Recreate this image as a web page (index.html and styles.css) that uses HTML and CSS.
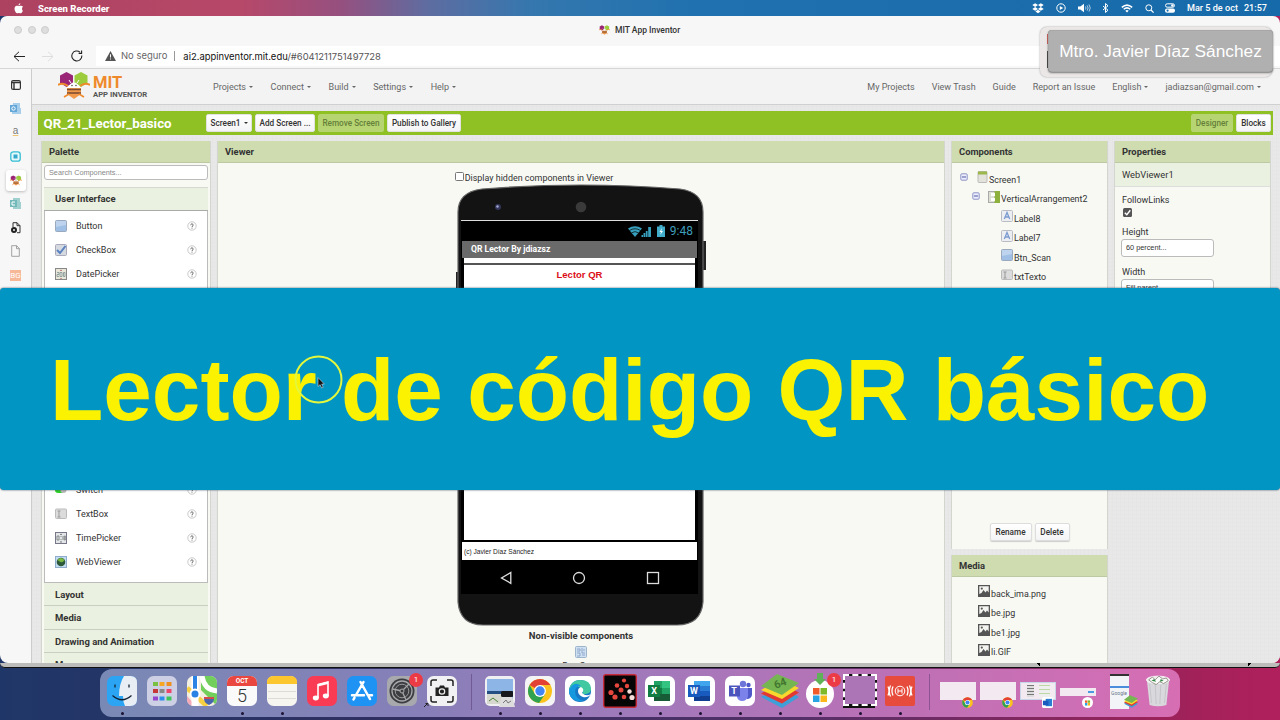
FILE: index.html
```html
<!DOCTYPE html>
<html lang="es">
<head>
    <meta charset="utf-8">
    <title>MIT App Inventor</title>
    <link rel="stylesheet" href="styles.css">
</head>
<body>
    <!-- shared icons -->
    <svg class="defs" width="0" height="0">
        <symbol id="help" viewBox="0 0 10 10"><circle cx="5" cy="5" r="4.200" fill="#fff" stroke="#bbb" stroke-width=".8"/><path d="M3.700 4.200c0-1.800 2.600-1.600 2.500-.1C6.200 5 5 4.900 5 6M5 6.700v.9" fill="none" stroke="#555" stroke-width=".9"/></symbol>
        <symbol id="button" viewBox="0 0 12 12"><rect x=".5" y=".5" width="11" height="11" rx="1" fill="#9fbfe4" stroke="#9aa9bd"/><path d="M1 1h10v4L1 7z" fill="#bdd3ee"/></symbol>
        <symbol id="textbox" viewBox="0 0 12 12"><rect x=".5" y="1" width="11" height="9.500" rx="1" fill="#dcdcdc" stroke="#bbb"/><path d="M2.500 3h3M4 3v6M2.500 9h3" stroke="#999" fill="none"/></symbol>
        <symbol id="label" viewBox="0 0 12 12"><rect x=".5" y=".5" width="11" height="11" rx="1" fill="#eceef2" stroke="#b9bcc4"/><path d="M3.300 9L6 2.500 8.700 9M4.300 7h3.400" fill="none" stroke="#7b9bd0" stroke-width="1.300"/></symbol>
        <symbol id="minus" viewBox="0 0 8 8"><rect x=".8" y=".8" width="6.400" height="6.400" rx="1" fill="#eef" stroke="#8c93c4"/><path d="M2 4h4" stroke="#4b559c"/></symbol>
        <symbol id="image" viewBox="0 0 12 12"><path d="M0 0h12v12H0z" fill="#555"/><path d="M1.300 1.300h9.400v6.200L9 5.500 7.500 7.500 5.500 5 3.500 8 1.300 9z" fill="#f3f3ef"/><circle cx="3.800" cy="3.600" r="1.100" fill="#555"/></symbol>
        <symbol id="bee" viewBox="0 0 32 27"><path d="M2 3.500L8.500 0 15 3.500V11l-6.500 4L2 11z" fill="#9a2577"/><path d="M16.500 3.500L23 0l6.500 3.500V11L23 15l-6.500-4z" fill="#9ccb3c"/><path d="M0 13q5-3 10 1M32 13q-5-3-10 1" stroke="#ef8a2c" stroke-width="2" fill="none"/><path d="M9 16q7-11 14 0z" fill="#fff"/><path d="M13 11l-2-3M19 11l2-3" stroke="#fff"/><circle cx="14" cy="13.500" r=".8" fill="#555"/><circle cx="18" cy="13.500" r=".8" fill="#555"/><path d="M9 16h14v6l-7 5-7-5z" fill="#f29a4b"/><path d="M9 17.500h14M9 21h14" stroke="#7a4a30" stroke-width="1.700"/><path d="M6 25l5-3M26 25l-5-3" stroke="#ef8a2c" stroke-width="1.500"/></symbol>
        <symbol id="chrome" viewBox="0 0 26 26"><circle cx="13" cy="13" r="12.500" fill="#fbc31c"/><path d="M13 13L2.200 6.700A12.500 12.500 0 0 1 23.800 6.800H13z" fill="#e24134"/><path d="M2.200 6.700A12.500 12.500 0 0 0 12 25.500L18.400 16 13 13 7.600 16z" fill="#31a350"/><circle cx="13" cy="13" r="6.200" fill="#fff"/><circle cx="13" cy="13" r="4.900" fill="#4285f4"/></symbol>
        <symbol id="ms" viewBox="0 0 14 14"><path d="M0 0h6.500v6.500H0z" fill="#ef5b2b"/><path d="M7.500 0H14v6.500H7.500z" fill="#7db928"/><path d="M0 7.500h6.500V14H0z" fill="#28a3e4"/><path d="M7.500 7.500H14V14H7.500z" fill="#fbb81b"/></symbol>
        <symbol id="stack" viewBox="0 0 38 34"><path d="M0 23l19-11 19 11-17 11z" fill="#3f9fd8"/><path d="M0 19.500l19-11 19 10-17 11z" fill="#e23a33"/><path d="M0 16L19 5l19 9-17 11z" fill="#f9d82e"/><path d="M0 12L16 0l22 9-17 12z" fill="#76b652"/></symbol>
    </svg>

    <div class="menubar">
        <svg class="apple" viewBox="0 0 10 12"><path d="M7 .3C5.700.5 5 1.500 5.100 2.600 6.300 2.500 7 1.500 7 .3zM8.900 6.200c0-1 .4-1.700 1.100-2.100C9 2.700 7.200 2.700 6.500 3c-.8.400-1.500.3-2.200 0C1.900 2.300.3 4.200.6 6.800c.3 2.300 1.700 4.500 3 4.500.8 0 1.100-.4 2-.4s1.200.5 2 .4c1-.1 1.900-1.700 2.200-2.800-.6-.4-.9-1.200-.9-2.300z" fill="#fff"/></svg>
        <b>Screen Recorder</b>
        <div class="status">
            <svg width="12" height="11" viewBox="0 0 12 11"><path d="M3.200.3L6 2.100 3.200 4 .3 2.100zM8.800.3l2.900 1.800L8.800 4 6 2.100zM3.200 4L6 5.900 3.200 7.700.3 5.900zM8.800 4l2.900 1.900-2.900 1.800L6 5.900zM6 6.800l2.600 1.700L6 10.300 3.400 8.500z" fill="#fff"/></svg>
            <svg width="10" height="10" viewBox="0 0 10 10"><circle cx="5" cy="5" r="4.200" fill="none" stroke="#fff"/><path d="M3.800 2.900v4.200L7.200 5z" fill="#fff"/></svg>
            <svg width="13" height="10" viewBox="0 0 13 10"><path d="M0 3.500h2.300L6 .8v8.400L2.300 6.500H0z" fill="#fff"/><path d="M7.500 3.500q1 1.500 0 3M9.200 2.400q1.800 2.600 0 5.200M11 1.500q2.500 3.500 0 7" stroke="#cfe2f3" fill="none" stroke-width=".8"/></svg>
            <svg width="7" height="10" viewBox="0 0 7 10"><path d="M1 3l5 4.200L3.500 9.500v-9L6 2.800 1 7" fill="none" stroke="#fff"/></svg>
            <svg width="12" height="9" viewBox="0 0 12 9"><path d="M.8 3.400q5.200-4.600 10.400 0M2.700 5.300q3.300-2.800 6.600 0" fill="none" stroke="#fff" stroke-width="1.500"/><path d="M4.300 6.700q1.700-1.200 3.400 0L6 8.600z" fill="#fff"/></svg>
            <svg width="9" height="9" viewBox="0 0 9 9"><circle cx="3.800" cy="3.800" r="3" fill="none" stroke="#fff"/><path d="M6 6l2.600 2.600" stroke="#fff" stroke-width="1.200"/></svg>
            <svg width="10" height="10" viewBox="0 0 10 10"><rect x=".5" y=".8" width="9" height="3.400" rx="1.700" fill="none" stroke="#fff"/><rect x="0" y="5.500" width="10" height="4.300" rx="2" fill="#fff"/><circle cx="7.400" cy="2.500" r="1.300" fill="#fff"/><circle cx="2.600" cy="7.600" r="1.100" fill="#1b6dab"/></svg>
            <span class="clock"><span>Mar 5 de oct</span><span>21:57</span></span>
        </div>
    </div>

    <div class="window">
        <div class="titlebar">
            <div class="lights"><i></i><i></i><i></i></div>
            <div class="tab-title"><svg width="11" height="10"><use href="#bee"/></svg>MIT App Inventor</div>
        </div>
        <div class="toolbar">
            <svg width="12" height="11" viewBox="0 0 12 11"><path d="M6 .8L1 5.500l5 4.700M1 5.500h11" fill="none" stroke="#222"/></svg>
            <svg width="12" height="11" viewBox="0 0 12 11"><path d="M6 .8l5 4.700-5 4.700M11 5.500H0" fill="none" stroke="#ddd"/></svg>
            <svg width="12" height="12" viewBox="0 0 12 12"><path d="M10.800 5.500A5 5 0 1 1 9 2.100M10.600.4v3h-3" fill="none" stroke="#222" stroke-width="1.100"/></svg>
            <div class="address">
                <svg width="11" height="10" viewBox="0 0 11 10"><path d="M5.500 0L11 10H0z" fill="#555"/><path d="M5.500 3.300v3.200M5.500 7.500v1" stroke="#fff"/></svg>
                <span class="insecure">No seguro</span>
                <span class="url">ai2.appinventor.mit.edu<em>/#6041211751497728</em></span>
            </div>
        </div>

        <div class="content">
            <div class="tabs">
                <div class="tab"><svg width="10" height="10" viewBox="0 0 10 10"><rect x=".6" y=".6" width="8.800" height="8.800" rx="1.500" fill="none" stroke="#333" stroke-width="1.200"/><path d="M1 2.500h8M3 2v7" stroke="#333" stroke-width="1.400"/></svg></div>
                <div class="tab"><svg width="11" height="11" viewBox="0 0 11 11"><path d="M3 0h7v5h1v6H2V8z" fill="#a6cdea"/><rect y="2" width="7" height="7" fill="#62a7d8"/><circle cx="3.500" cy="5.500" r="1.700" fill="none" stroke="#fff"/></svg></div>
                <div class="tab amazon">a</div>
                <div class="tab"><svg width="11" height="11" viewBox="0 0 11 11"><rect x=".8" y=".8" width="9.400" height="9.400" rx="2.500" fill="#e5f8fb" stroke="#35bdd2" stroke-width="1.300"/><rect x="3.500" y="3.500" width="4" height="4" fill="#35a9cc"/></svg></div>
                <div class="tab"><span class="active-tab"><svg width="12" height="11"><use href="#bee"/></svg></span></div>
                <div class="tab"><svg width="11" height="11" viewBox="0 0 11 11"><path d="M3 0h7v4h1v7H3V9z" fill="#9fd0cf"/><rect y="2" width="7" height="7" fill="#73b9b9"/><path d="M5 4H2v3h3" fill="none" stroke="#fff"/></svg></div>
                <div class="tab"><svg width="10" height="12" viewBox="0 0 10 12"><path d="M2 5V.7h4l3 3v7H6M6 .7v3h3" fill="none" stroke="#333"/><circle cx="3" cy="8" r="3" fill="#222"/><path d="M2 7l2 2M4 7L2 9" stroke="#fff" stroke-width=".7"/></svg></div>
                <div class="tab"><svg width="9" height="12" viewBox="0 0 9 12"><path d="M.7.7h5L8.300 3.500v7.800H.7zM5.500.7v3h3" fill="none" stroke="#999" stroke-width=".9"/></svg></div>
                <div class="tab"><span class="bg-icon">BG</span></div>
            </div>

            <div class="page">
                <div class="nav">
                    <div class="brand">
                        <svg width="32" height="27"><use href="#bee"/></svg>
                        <div><strong>MIT</strong><span>APP INVENTOR</span></div>
                    </div>
                    <div class="menu">
                        <span class="drop">Projects</span><span class="drop">Connect</span><span class="drop">Build</span><span class="drop">Settings</span><span class="drop">Help</span>
                    </div>
                    <div class="menu menu-right">
                        <span>My Projects</span><span>View Trash</span><span>Guide</span><span>Report an Issue</span><span class="drop">English</span><span class="drop">jadiazsan@gmail.com</span>
                    </div>
                </div>

                <div class="project-bar">
                    <h1>QR_21_Lector_basico</h1>
                    <button class="btn w46 drop">Screen1</button>
                    <button class="btn w60">Add Screen ...</button>
                    <button class="btn w66 off">Remove Screen</button>
                    <button class="btn w74">Publish to Gallery</button>
                    <span class="grow"></span>
                    <button class="btn w42 off">Designer</button>
                    <button class="btn w35">Blocks</button>
                </div>

                <div class="workspace">
                    <div class="panel palette">
                        <h2>Palette</h2>
                        <div class="search">Search Components...</div>
                        <div class="category open">User Interface</div>
                        <ul class="items">
                            <li><svg><use href="#button"/></svg>Button<svg class="help"><use href="#help"/></svg></li>
                            <li><svg viewBox="0 0 12 12"><rect x=".5" y=".5" width="11" height="11" rx="1" fill="#d5dae1" stroke="#aab"/><path d="M2 6l3 3 5.500-7" fill="none" stroke="#5b82c0" stroke-width="2"/></svg>CheckBox<svg class="help"><use href="#help"/></svg></li>
                            <li><svg viewBox="0 0 12 12"><rect x=".5" y=".5" width="11" height="11" fill="#e9e6da" stroke="#888"/><path d="M2 4.500h2v2H2v2h2M5 4.500h2v4H5zM8.500 4.500v4h1.500v-4z" fill="none" stroke="#7f9494" stroke-width=".8"/><path d="M5 3l1-1.500L7 3zM5 10l1 1 1-1z" fill="#a55"/></svg>DatePicker<svg class="help"><use href="#help"/></svg></li>
                            <li class="after-gap"><svg viewBox="0 0 12 12"><rect y="3" width="9" height="6" rx="3" fill="#2bd02b"/><circle cx="8.500" cy="6" r="3" fill="#bbb"/></svg>Switch<svg class="help"><use href="#help"/></svg></li>
                            <li><svg><use href="#textbox"/></svg>TextBox<svg class="help"><use href="#help"/></svg></li>
                            <li><svg viewBox="0 0 12 12"><rect x=".5" y=".5" width="11" height="11" fill="#e2e6e8" stroke="#778"/><path d="M2 4h2v4H2zM6 4v1M6 7v1M8 4v4M9.300 4h1v4h-1z" fill="none" stroke="#777" stroke-width=".8"/><path d="M5 3l1-1.500L7 3zM5 9.500l1 1.500 1-1.500z" fill="#555"/></svg>TimePicker<svg class="help"><use href="#help"/></svg></li>
                            <li><svg viewBox="0 0 12 12"><rect x=".5" y=".5" width="11" height="11" fill="#c4dcf2" stroke="#8eaccb"/><circle cx="6" cy="6" r="4.300" fill="#2c5a3a"/><path d="M2.500 4q3-4 7 0-2 3-4 2t-3-2z" fill="#79b843"/></svg>WebViewer<svg class="help"><use href="#help"/></svg></li>
                        </ul>
                        <div class="category">Layout</div>
                        <div class="category">Media</div>
                        <div class="category">Drawing and Animation</div>
                        <div class="category">Maps</div>
                    </div>

                    <div class="panel viewer">
                        <h2>Viewer</h2>
                        <div class="hidden-toggle"><i></i>Display hidden components in Viewer</div>
                        <div class="phone">
                            <svg viewBox="0 0 252 442" width="252" height="442">
                                <path d="M1 88h4v60H1zM247 57h4v29h-4z" fill="#222"/>
                                <path d="M3 28Q3 8 27 5Q126-3 225 5Q248 8 248 28V418Q246 441 222 441H28Q5 441 3 418z" fill="#131313" stroke="#666" stroke-width="1.200"/>
                                <circle cx="43" cy="23" r="3" fill="#33365a"/><circle cx="42.500" cy="22.500" r="1.200" fill="#a5a8d0"/>
                                <circle cx="126" cy="23" r="5.300" fill="#3a3a3a"/>
                            </svg>
                            <div class="screen">
                                <div class="android-status">
                                    <svg width="24" height="11" viewBox="0 0 24 11"><path d="M0 2.500q7-4.500 14 0L7 11z" fill="#38a0bd"/><path d="M1.500 4.500q5.500-3.500 11 0M3.500 6.800q3.500-2.300 7 0" fill="none" stroke="#000" stroke-width=".7"/><path d="M13.500 11v-2h1.500v2zM15.500 11V7h1.800v4zM17.800 11V5h1.800v6zM20.200 11V1h2.800v10z" fill="#38a0bd"/></svg>
                                    <svg width="8" height="12" viewBox="0 0 8 12"><path d="M2.500 0h3v1.500H8V12H0V1.500h2.500z" fill="#43aecb"/><path d="M5 3L2.500 7H4l-.8 3L6 6H4.300z" fill="#fff"/></svg>
                                    9:48
                                </div>
                                <div class="app-title">QR Lector By jdiazsz</div>
                                <div class="app-body">Lector QR</div>
                                <div class="app-foot">(c) Javier Díaz Sánchez</div>
                                <div class="android-nav">
                                    <svg width="12" height="14" viewBox="0 0 12 14"><path d="M10.800 1.500v10.800L1.500 7z" fill="none" stroke="#ddd" stroke-width="1.300"/></svg>
                                    <svg width="14" height="14" viewBox="0 0 14 14"><circle cx="7" cy="7" r="5.500" fill="none" stroke="#ddd" stroke-width="1.300"/></svg>
                                    <svg width="14" height="14" viewBox="0 0 14 14"><rect x="1.500" y="1.500" width="11" height="11" fill="none" stroke="#ddd" stroke-width="1.300"/></svg>
                                </div>
                            </div>
                        </div>
                        <div class="nonvisible">
                            <b>Non-visible components</b>
                            <svg width="12" height="12" viewBox="0 0 12 12"><rect x=".5" y=".5" width="11" height="11" rx="1" fill="#cfe0f0" stroke="#9db4cc"/><path d="M2 3h3v2H2M7 2v5h3M2 7h3v3H2M7 9h3M9 3v2" fill="none" stroke="#7d9dc4" stroke-width=".8"/></svg>
                            <span>Bar_Scan</span>
                        </div>
                    </div>

                    <div class="column">
                        <div class="panel components">
                            <h2>Components</h2>
                            <div class="tree">
                                <div class="node"><svg class="minus"><use href="#minus"/></svg><svg viewBox="0 0 12 12"><rect x="2" y=".5" width="9" height="11" rx="1" fill="#e3e3dc" stroke="#bbb"/><path d="M2 .5h9v3H2z" fill="#9cb84a"/></svg>Screen1</div>
                                <div class="node n2"><svg class="minus"><use href="#minus"/></svg><svg viewBox="0 0 12 12"><rect x=".5" y=".5" width="11" height="11" fill="#dde1d3" stroke="#aaa"/><path d="M6.500 0H12v12H6.500z" fill="#8db13c"/><path d="M3 2h4v3H3zM3 7h4v3H3z" fill="#fff"/></svg>VerticalArrangement2</div>
                                <div class="node n3"><svg><use href="#label"/></svg>Label8</div>
                                <div class="node n3"><svg><use href="#label"/></svg>Label7</div>
                                <div class="node n3"><svg><use href="#button"/></svg>Btn_Scan</div>
                                <div class="node n3"><svg><use href="#textbox"/></svg>txtTexto</div>
                            </div>
                            <div class="actions"><button class="btn w42">Rename</button><button class="btn w35">Delete</button></div>
                        </div>
                        <div class="panel media">
                            <h2>Media</h2>
                            <div class="files">
                                <div class="node"><svg><use href="#image"/></svg>back_ima.png</div>
                                <div class="node"><svg><use href="#image"/></svg>be.jpg</div>
                                <div class="node"><svg><use href="#image"/></svg>be1.jpg</div>
                                <div class="node"><svg><use href="#image"/></svg>li.GIF</div>
                            </div>
                        </div>
                    </div>

                    <div class="panel properties">
                        <h2>Properties</h2>
                        <div class="selected">WebViewer1</div>
                        <label>FollowLinks</label>
                        <svg class="check" viewBox="0 0 9 9"><rect width="9" height="9" rx="1.500" fill="#555"/><path d="M1.800 4.700l2 2 3.500-4.500" fill="none" stroke="#fff" stroke-width="1.400"/></svg>
                        <label>Height</label>
                        <div class="field">60 percent...</div>
                        <label>Width</label>
                        <div class="field">Fill parent...</div>
                    </div>
                </div>
            </div>
        </div>
    </div>
    <div class="back-window"><i></i><i></i></div>

    <div class="dock">
        <div class="app run"><svg viewBox="0 0 30 30"><rect width="30" height="30" rx="6.500" fill="#2ba4f4"/><path d="M17 0h6.500Q30 0 30 6.500v17Q30 30 23.500 30H18q-2-4-2-10h-4Q12 8 17 0z" fill="#e9eef5"/><path d="M8 8.500v3M22 8.500v3" stroke="#123" stroke-width="1.300"/><path d="M5.500 19.500q9.500 8.500 19 0" fill="none" stroke="#123" stroke-width="1.200"/></svg></div>
        <div class="app"><svg viewBox="0 0 30 30"><rect width="30" height="30" rx="6.500" fill="#cdd0e4"/><path d="M6 6h5v4H6z" fill="#7ac143"/><path d="M12.500 6h5v4h-5z" fill="#f7a623"/><path d="M19.500 6h5v4h-5z" fill="#ef8f20"/><path d="M6 13h5v4H6z" fill="#c63838"/><path d="M12.500 13h5v4h-5z" fill="#888"/><path d="M19.500 13h5v4h-5z" fill="#ef4469"/><path d="M6 20.500h5v4H6z" fill="#9446cf"/><path d="M12.500 20.500h5v4h-5z" fill="#2d8fec"/><path d="M19.500 20.500h5v4h-5z" fill="#3fc45a"/></svg></div>
        <div class="app"><svg viewBox="0 0 30 30"><clipPath id="r"><rect width="30" height="30" rx="6.500"/></clipPath><g clip-path="url(#r)"><path d="M0 0h30v30H0z" fill="#f2efe2"/><path d="M14 0h16v30L14 14z" fill="#72cf5c"/><path d="M15 0q2 14 15 15" stroke="#fff" stroke-width="5" fill="none"/><path d="M0 12l20 18" stroke="#f7cf43" stroke-width="5"/><path d="M0 20v10h9z" fill="#f3a9b8"/><path d="M8 0v30" stroke="#fff" stroke-width="7"/><path d="M8 0v16" stroke="#2a82e4" stroke-width="4"/><circle cx="8" cy="18" r="4.500" fill="#2a82e4" stroke="#fff" stroke-width="2"/><path d="M17 21h10q1 5-5 8-6-3-5-8z" fill="#4865ae"/><path d="M17 21h10v2H17z" fill="#d34b4b"/></g></svg></div>
        <div class="app run"><div class="calendar"><b>OCT</b><span>5</span></div></div>
        <div class="app run"><svg viewBox="0 0 30 30"><rect width="30" height="30" rx="6.500" fill="#f6f5f0"/><path d="M0 8V6.500Q0 0 6.500 0h17Q30 0 30 6.500V8z" fill="#fcc62f"/><path d="M1 15.500h28M1 22.500h28" stroke="#d2d0ca" stroke-width=".7"/></svg></div>
        <div class="app"><svg viewBox="0 0 30 30"><rect width="30" height="30" rx="6.500" fill="#f93b54"/><path d="M11 22V8.500L21 6v14" fill="none" stroke="#fff" stroke-width="1.600"/><path d="M11 10.500L21 8V5.500L11 8z" fill="#fff"/><ellipse cx="8.800" cy="22" rx="3" ry="2.400" fill="#fff"/><ellipse cx="18.800" cy="20" rx="3" ry="2.400" fill="#fff"/></svg></div>
        <div class="app"><svg viewBox="0 0 30 30"><rect width="30" height="30" rx="6.500" fill="#1e93f3"/><path d="M16.500 6L9 19M6.500 23.500l1-1.800M13.500 6l9.500 17M5 19.300h12M21 19.300h4" fill="none" stroke="#fff" stroke-width="2.500" stroke-linecap="round"/></svg></div>
        <div class="app"><svg viewBox="0 0 30 30"><rect width="30" height="30" rx="6.500" fill="#a8a9ad"/><circle cx="15" cy="15" r="12.500" fill="#3b3d40"/><circle cx="15" cy="15" r="10" fill="none" stroke="#a7a8aa" stroke-width="1.300"/><circle cx="15" cy="15" r="6.800" fill="none" stroke="#98999b"/><path d="M15 15L5.500 13M15 15l7-7M15 15l4 9" stroke="#a7a8aa" stroke-width="1.300"/><circle cx="15" cy="15" r="2" fill="#3b3d40" stroke="#aaa"/></svg><span class="badge">1</span></div>
        <div class="app"><svg viewBox="0 0 30 30"><rect width="30" height="30" rx="6.500" fill="#f1f0f3"/><path d="M4 10V6q0-2 2-2h4M20 4h4q2 0 2 2v4M26 20v4q0 2-2 2h-4M10 26H6q-2 0-2-2v-4" fill="none" stroke="#222" stroke-width="1.500"/><path d="M8.500 11.500H12l1-2h4l1 2h3.500v8.500h-13z" fill="#222"/><circle cx="15" cy="15.500" r="2.700" fill="none" stroke="#eee" stroke-width="1.200"/><path d="M-3 31l3-3M-1.500 27.500H1V30" fill="none" stroke="#222"/></svg></div>
        <hr>
        <div class="app run"><svg viewBox="0 0 30 30"><rect width="30" height="30" rx="5" fill="#f0f0f2"/><path d="M2 3h26v24H2z" fill="#8db6e6"/><path d="M2 15h26v6H2z" fill="#254f83"/><path d="M2 18h15v10H2z" fill="#d6d7cf"/><path d="M4 25l4-3 5 4" stroke="#4d843a" fill="none"/><path d="M17 20h10l3 11H14z" fill="#ddd"/><path d="M18 27l3-3 2 3 3-2" fill="none" stroke="#777"/><rect x="16" y="15" width="12" height="6" rx="1.500" fill="#17191c"/></svg></div>
        <div class="app run"><svg viewBox="0 0 30 30"><rect width="30" height="30" rx="6.500" fill="#f4f4f4"/><use href="#chrome" x="2.500" y="2.500" width="25" height="25"/></svg></div>
        <div class="app run"><svg viewBox="0 0 30 30"><rect width="30" height="30" rx="6.500" fill="#fff"/><circle cx="15" cy="15" r="11" fill="#1878c5"/><path d="M4 14Q6 4 15 4q11 0 11 9 0 6-9 5 2-2 0-5Q12 8 4 14z" fill="#42c9a1"/><path d="M4 14Q9 4 16 10q-5 0-6 5 0 8 9 10-12 2-15-8z" fill="#1598de"/><path d="M13 15q0-3 3-4 4 2 1 6 4 4 9 1-3 4-8 3-5-2-5-6z" fill="#fff"/></svg></div>
        <div class="app run"><svg class="wide" viewBox="0 0 34 34"><rect x=".7" y=".7" width="32.600" height="32.600" rx="2" fill="#050505" stroke="#c62c3a" stroke-width="1.400"/><g fill="#e5473f"><circle cx="21" cy="6.500" r="2.100"/><circle cx="14" cy="11.500" r="2.300"/><circle cx="24" cy="12" r="2.200"/><circle cx="8" cy="18.500" r="2.600"/><circle cx="18" cy="16" r="2.500"/><circle cx="12" cy="23" r="2.600"/><circle cx="21" cy="23" r="2.300"/></g><g fill="#f5dcd9"><circle cx="26.500" cy="17.500" r="2.200"/><circle cx="29" cy="23.500" r="2.600"/></g></svg></div>
        <div class="app run"><svg viewBox="0 0 30 30"><rect width="30" height="30" rx="6.500" fill="#fff"/><path d="M9 5h16v20H9z" fill="#21a366"/><path d="M17 5h8v7h-8z" fill="#33c481"/><path d="M9 12h8v7H9z" fill="#107c41"/><path d="M9 18h16v7H9z" fill="#185c37"/><path d="M3 9h12v12H3z" fill="#107c41"/></svg><b class="letter">X</b></div>
        <div class="app run"><svg viewBox="0 0 30 30"><rect width="30" height="30" rx="6.500" fill="#fff"/><path d="M9 5h16v20H9z" fill="#2b7cd3"/><path d="M9 5h16v5H9z" fill="#41a5ee"/><path d="M9 15h16v5H9z" fill="#185abd"/><path d="M9 20h16v5H9z" fill="#103f91"/><path d="M3 9h12v12H3z" fill="#185abd"/></svg><b class="letter">W</b></div>
        <div class="app run"><svg viewBox="0 0 30 30"><rect width="30" height="30" rx="6.500" fill="#fff"/><circle cx="18" cy="8" r="3.200" fill="#6d76d8"/><circle cx="23.500" cy="9" r="2.200" fill="#5059c9"/><path d="M18 12h9v7q-1 4-5 4z" fill="#5059c9"/><path d="M12 12h11v8q-1 5-6 5-4 0-5-4z" fill="#7b83eb"/><path d="M4 9.500h11v11H4z" fill="#4b53bc"/></svg><b class="letter">T</b></div>
        <div class="app run"><svg class="stack"><use href="#stack"/></svg><span class="n64">64</span></div>
        <div class="app run"><svg viewBox="0 0 30 30"><circle cx="15" cy="18" r="14" fill="#fff"/><use href="#ms" x="8" y="12" width="14" height="14"/><path d="M12-3h6v6h3l-6 6-6-6h3z" fill="#5fb257"/></svg><span class="badge">1</span></div>
        <div class="app run"><div class="marquee"></div></div>
        <div class="app run"><svg viewBox="0 0 30 30"><rect width="30" height="30" rx="2" fill="#e64b3c"/><circle cx="15" cy="15" r="4.800" fill="none" stroke="#fff"/><path d="M13 12.500v5M17 12.500v5M13 15h4" stroke="#fff"/><path d="M8 10.500q-2 4.500 0 9M5.500 9.500q-2.500 5.500 0 11M3 10.500q2 4.500 0 9M22 10.500q2 4.500 0 9M24.500 9.500q2.500 5.500 0 11M27 10.500q-2 4.500 0 9" stroke="#fff" stroke-width="1.300" fill="none"/></svg></div>
        <hr>
        <div class="app mini"><div class="thumb"></div><svg><use href="#chrome"/></svg></div>
        <div class="app mini"><div class="thumb"></div><svg><use href="#chrome"/></svg></div>
        <div class="app mini"><div class="thumb doc"><i></i><i></i></div><svg viewBox="0 0 12 12"><rect width="12" height="12" rx="2" fill="#fff"/><path d="M4 2h7v8H4z" fill="#2b7cd3"/><path d="M1 4h6v5H1z" fill="#185abd"/></svg></div>
        <div class="app mini"><div class="thumb flat"><i></i></div><svg viewBox="0 0 14 14"><circle cx="7" cy="7" r="7" fill="#fff"/><use href="#ms" x="3.500" y="4" width="7" height="7"/></svg></div>
        <div class="app mini tall"><div class="shot"><span>Google</span></div><svg><use href="#stack"/></svg></div>
        <div class="app"><svg class="trash" viewBox="0 0 28 34"><path d="M2 5h24l-3 27q-9 3-18 0z" fill="#d9d9dd"/><path d="M5 9l2 21M11 10l1 21M17 10l-1 21M23 9l-2 21" stroke="#c2c2c8" fill="none"/><ellipse cx="14" cy="5" rx="12.500" ry="4" fill="#eee" stroke="#f7f7f7"/><path d="M4 5l4-3 3 3 4-4 4 3 4-1 2 3-5 3-4-2-4 3-4-2z" fill="#fafafa" stroke="#665" stroke-width=".7"/><path d="M7 6l3-2 2 3zM17 4l3 2-4 1z" fill="#384"/></svg></div>
    </div>

    <div class="notification"><i></i></div>
    <div class="author">Mtro. Javier Díaz Sánchez</div>
    <div class="banner"><span>Lector de código QR básico</span></div>
    <svg class="pointer" width="50" height="50" viewBox="0 0 50 50"><circle cx="25.500" cy="25.500" r="23" fill="none" stroke="#e4f73c" stroke-width="2"/><path d="M25 23.500v9l2.100-1.800 1.500 3.300 1.600-.7-1.500-3.200h2.700z" fill="#111" stroke="#cde" stroke-width=".6"/></svg>
</body>
</html>
```
FILE: styles.css
```css
* {
    box-sizing: border-box;
}
body {
    margin: 0;
    width: 1280px;
    height: 720px;
    overflow: hidden;
    position: relative;
    font-family: Roboto, sans-serif;
    font-size: 9px;
    color: #333;
    background: linear-gradient(90deg, #1f3768 0, #302f60 400px, #553068 800px, #a32159 1200px, #b0205c 1280px);
}
svg {
    display: block;
    flex: none;
}
.defs {
    position: absolute;
}

/* system menu bar */
.menubar {
    height: 16px;
    display: flex;
    align-items: center;
    padding: 0 13px 0 14px;
    color: #fff;
    font-size: 9.5px;
    background: linear-gradient(90deg, #ad4260 0, #b74869 240px, #96507f 340px, #5d6da1 430px, #3577ae 530px, #1f71af 700px, #176aa9 100%);
}
.apple {
    width: 9px;
    height: 11px;
    margin-right: 15px;
}
.menubar b {
    font-weight: 800;
}
.status {
    margin-left: auto;
    display: flex;
    align-items: center;
    gap: 11.7px;
}
.clock {
    display: flex;
    gap: 6px;
    font-weight: 500;
    font-size: 9.1px;
}

/* browser */
.window {
    height: 647px;
    display: flex;
    flex-direction: column;
    background: #f7f7f7;
    border-radius: 7px 7px 8px 8px;
    overflow: hidden;
}
.titlebar {
    height: 28px;
    flex: none;
    display: flex;
    align-items: center;
}
.lights {
    display: flex;
    gap: 5.500px;
    padding-left: 14px;
}
.lights i {
    width: 8px;
    height: 8px;
    border-radius: 50%;
    background: #dedede;
    border: 1px solid #ccc;
}
.tab-title {
    display: flex;
    gap: 5px;
    align-items: center;
    margin-left: 550px;
    font-weight: 500;
    font-size: 8.5px;
}
.toolbar {
    height: 24px;
    flex: none;
    display: flex;
    align-items: center;
    padding-left: 13px;
    gap: 17px;
}
.address {
    flex: 1;
    height: 20px;
    margin-left: -4px;
    padding-left: 9px;
    background: #fff;
    display: flex;
    align-items: center;
    gap: 5px;
    font-family: Inter, sans-serif;
    font-size: 9.45px;
}
.insecure {
    color: #666;
    padding-right: 7px;
    border-right: 1px solid #999;
    line-height: 10px;
}
.url {
    margin-left: 3px;
    color: #111;
}
.url em {
    font-style: normal;
    color: #555;
}
.content {
    flex: 1;
    display: flex;
    min-height: 0;
    border-top: 1px solid #d5d5d5;
}
.tabs {
    width: 32px;
    flex: none;
    padding-top: 4px;
    border-right: 1px solid #ccc;
}
.tab {
    height: 23.8px;
    display: flex;
    align-items: center;
    justify-content: center;
}
.amazon {
    padding-bottom: 4px;
    font-family: "Liberation Sans", sans-serif;
    font-size: 10px;
    color: #777;
    text-decoration: underline #efc470;
}
.active-tab {
    padding: 5px 4px;
    background: #fff;
    border-radius: 3px;
    box-shadow: 0 1px 3px #bbb;
}
.bg-icon {
    background: #f7b898;
    color: #fff;
    font-size: 8px;
    line-height: 11px;
}

/* App Inventor */
.page {
    flex: 1;
    display: flex;
    flex-direction: column;
    min-width: 0;
    background: repeating-linear-gradient(0deg, rgba(0,0,0,.008) 0 1px, transparent 1px 4px), repeating-linear-gradient(90deg, rgba(0,0,0,.008) 0 1px, transparent 1px 4px), #e8e8e8;
}
.nav {
    height: 36px;
    flex: none;
    display: flex;
    align-items: center;
    padding: 0 19px 0 26px;
    background: #f3f3f3;
    border-bottom: 1px solid #d0d0d0;
    color: #666;
}
.brand {
    display: flex;
    gap: 3px;
    width: 155px;
    margin-top: -3px;
}
.brand strong, .brand span {
    display: block;
    white-space: nowrap;
}
.brand strong {
    margin-top: 3px;
    font-size: 16.500px;
    line-height: 15px;
    color: #ef8a2c;
}
.brand span {
    font-size: 7.700px;
    line-height: 9px;
    font-weight: 700;
    color: #555;
}
.menu {
    display: flex;
    gap: 17.6px;
}
.menu-right {
    margin-left: auto;
    gap: 17px;
}
.drop::after {
    content: "";
    display: inline-block;
    margin-left: 3px;
    vertical-align: 2px;
    border: 2.800px solid transparent;
    border-top-color: currentColor;
    border-bottom: 0;
}
.project-bar {
    height: 24px;
    flex: none;
    margin: 6px 7px 6px 6px;
    padding: 0 2px 0 5.500px;
    background: #8fc024;
    display: flex;
    align-items: center;
    gap: 3px;
}
.project-bar h1 {
    margin: 2px 0 0;
    width: 159.500px;
    font-size: 13.300px;
    line-height: 20px;
    color: #fff;
}
.btn {
    flex: none;
    height: 18px;
    padding: 0;
    border: 1px solid #e2e2e2;
    border-radius: 2px;
    background: linear-gradient(#fff, #f4f4f6);
    font: 500 8.200px Roboto, sans-serif;
    color: #333;
    white-space: nowrap;
}
.btn.off {
    background: #b6d572;
    border-color: #b6d572;
    color: #66803a;
}
.w46 { width: 46px; }
.w60 { width: 60px; }
.w66 { width: 66px; }
.w74 { width: 74px; }
.w42 { width: 42px; }
.w35 { width: 35px; }
.grow {
    flex: 1;
}
.workspace {
    flex: 1;
    display: flex;
    gap: 6px;
    min-height: 0;
    padding: 0 9px;
}
.panel {
    background: #f8f9f3;
    border: 1px solid #d3d5cf;
    border-width: 0 1px;
    flex: none;
}
.panel h2 {
    flex: none;
    margin: 0;
    height: 22px;
    padding-left: 7px;
    background: #cedcb0;
    border-bottom: 1px solid #bcc9a2;
    font-size: 9.400px;
    line-height: 22px;
}
.palette {
    width: 170px;
}
.search {
    height: 15px;
    margin: 2px 2px 7px;
    padding-left: 4px;
    background: #fff;
    border: 1px solid #bbb;
    border-radius: 3px;
    font: 7.300px/13px "Liberation Sans", sans-serif;
    color: #888;
}
.category {
    height: 23.400px;
    margin: 0 2px;
    padding-left: 11px;
    background: #ebf1e0;
    border-bottom: 1px solid #c9cdc2;
    font-weight: 700;
    font-size: 9.500px;
    line-height: 23px;
}
.category.open {
    border-top: 1px solid #d5d8ce;
    border-bottom-color: #aaa;
    height: 24px;
    line-height: 21px;
}
.items {
    list-style: none;
    margin: 0 2px;
    padding: 3px 10px 8px;
    background: #fff;
    border: 1px solid #bbb;
    border-top: 0;
}
.items li {
    height: 24px;
    display: flex;
    align-items: center;
}
.items li svg {
    width: 12px;
    height: 12px;
    margin-right: 9px;
}
.items li .help {
    width: 10px;
    height: 10px;
    margin: 0 0 0 auto;
}
.items .after-gap {
    margin-top: 192px;
}
.viewer {
    width: 728px;
    display: flex;
    flex-direction: column;
    align-items: center;
}
.viewer h2 {
    width: 100%;
}
.hidden-toggle {
    display: flex;
    align-items: center;
    height: 12px;
    margin: 10px 0 1px -94px;
    font-size: 8.950px;
}
.hidden-toggle i {
    width: 9px;
    height: 9px;
    margin: -3px 1px 0 0;
    background: #fff;
    border: 1px solid #777;
    border-radius: 1.500px;
}
.phone {
    width: 252px;
    height: 442px;
    flex: none;
    position: relative;
}
.screen {
    position: absolute;
    left: 6px;
    top: 36px;
    width: 237px;
    height: 374px;
    display: flex;
    flex-direction: column;
    background: #000;
    border-top: 1px solid #ddd;
}
.android-status {
    height: 20px;
    display: flex;
    align-items: center;
    justify-content: flex-end;
    gap: 5px;
    padding-right: 5px;
    font-size: 12px;
    color: #3e9db8;
}
.app-title {
    height: 17px;
    margin: 0 1px;
    padding-left: 9px;
    background: #6a6a6a;
    color: #fff;
    font-weight: 700;
    font-size: 8.600px;
    line-height: 16px;
}
.app-body {
    height: 284px;
    margin: 0 1px;
    padding-top: 11px;
    background: #fff;
    border: 1px solid #000;
    border-width: 0 2px 2px;
    color: #dc0d17;
    font: 700 9.500px "Liberation Sans", sans-serif;
    text-align: center;
    box-shadow: inset 0 5px #fff, inset 0 7px #555;
}
.app-foot {
    height: 18px;
    margin: 0 1px;
    padding-left: 2px;
    background: #fff;
    color: #222;
    font: 6.600px/19px "Liberation Sans", sans-serif;
}
.android-nav {
    flex: 1;
    display: flex;
    align-items: center;
    justify-content: space-between;
    padding: 1px 38px 0 39px;
}
.nonvisible {
    display: flex;
    flex-direction: column;
    align-items: center;
    gap: 5px;
    margin-top: 4px;
    font-size: 9px;
}
.nonvisible b {
    font-size: 9.500px;
    line-height: 11px;
}
.nonvisible span {
    margin-top: -2px;
    line-height: 11px;
}
.column {
    width: 157px;
    flex: none;
    display: flex;
    flex-direction: column;
    gap: 6px;
}
.components {
    height: 408px;
}
.tree {
    height: 360px;
    padding: 7px 0 0 9px;
}
.node {
    height: 19.500px;
    display: flex;
    align-items: center;
    gap: 1px;
    font-size: 8.900px;
    line-height: 24px;
}
.node svg {
    width: 12px;
    height: 12px;
    margin-top: -5px;
}
.node .minus {
    width: 8px;
    height: 8px;
    margin: -6px 7px 0 -1px;
}
.n2 {
    padding-left: 12px;
}
.n3 {
    padding-left: 40px;
}
.actions {
    display: flex;
    justify-content: center;
    gap: 3px;
}
.actions .btn {
    border-color: #ddd;
    box-shadow: 0 1px 1px #ccc;
}
.media {
    flex: 1;
    overflow: hidden;
}
.files {
    padding: 7px 0 0 26px;
}
.properties {
    width: 157px;
    height: 340px;
}
.selected {
    height: 24px;
    margin-bottom: -2px;
    padding-left: 7px;
    background: #ebf1e0;
    border-bottom: 1px solid #ddd;
    font-size: 9.300px;
    line-height: 24px;
}
.properties label {
    display: block;
    margin: 9px 7px 3px;
    font-size: 9px;
    line-height: 12px;
}
.check {
    width: 9px;
    height: 9px;
    margin: -1px 0 0 8px;
}
.properties .field {
    width: 93px;
    height: 18px;
    margin: -2px 0 0 6px;
    padding-left: 4px;
    background: #fff;
    border: 1px solid #bbb;
    border-radius: 3px;
    font: 7.300px/16px "Liberation Sans", sans-serif;
}
.back-window {
    height: 5px;
    display: flex;
    background: #bcbcba;
    border-bottom: 1px solid #111;
    border-radius: 0 0 8px 8px;
}
.back-window i {
    width: 4px;
    height: 4px;
    margin-left: 1036px;
    background: linear-gradient(45deg, transparent 50%, #000 50%);
}
.back-window i + i {
    margin-left: 208px;
    transform: scaleX(-1);
}

/* dock */
.dock {
    width: 1080px;
    height: 48px;
    margin: 1px 0 0 100px;
    padding-left: 2px;
    display: flex;
    border-radius: 12px;
    background: linear-gradient(90deg, #7989b5 0, #8580b8 300px, #a279bb 550px, #bd70b5 800px, #d76eb4 1080px);
}
.dock hr {
    width: 1px;
    height: 36px;
    margin: 5px 8.500px;
    border: 0;
    background: rgba(70,40,100,.4);
}
.app {
    width: 40px;
    height: 48px;
    flex: none;
    padding-top: 7px;
    display: flex;
    justify-content: center;
    align-items: flex-start;
    position: relative;
}
.app svg {
    width: 30px;
    height: 30px;
    overflow: visible;
}
.app svg.wide {
    width: 34px;
    height: 34px;
    margin-top: -2px;
}
.app svg.stack {
    width: 38px;
    height: 34px;
    margin-top: -2px;
}
.app svg.trash {
    width: 26px;
    height: 34px;
    margin-top: -2px;
}
.run::after {
    content: "";
    position: absolute;
    bottom: 2px;
    left: 19px;
    width: 3px;
    height: 3px;
    border-radius: 50%;
    background: #1b1030;
}
.calendar {
    width: 30px;
    height: 30px;
    border-radius: 6.500px;
    overflow: hidden;
    background: #fafafa;
    text-align: center;
}
.calendar b {
    display: block;
    height: 10px;
    background: #e9473f;
    color: #fff;
    font-size: 6.500px;
    line-height: 11px;
}
.calendar span {
    font: 300 18px/19px Roboto, sans-serif;
}
.badge {
    position: absolute;
    right: -1px;
    top: 4px;
    width: 14px;
    height: 14px;
    border-radius: 50%;
    background: #ed3b46;
    color: #fff;
    font-size: 8px;
    line-height: 14px;
    text-align: center;
}
.letter {
    position: absolute;
    left: 8px;
    top: 16px;
    width: 12px;
    color: #fff;
    font-size: 9px;
    line-height: 12px;
    text-align: center;
}
.n64 {
    position: absolute;
    top: 8px;
    font-size: 11px;
    font-weight: 700;
    color: #437730;
    transform: rotate(-22deg);
}
.marquee {
    width: 34px;
    height: 32px;
    margin-top: -2px;
    border: 2px dashed #fff;
    box-shadow: -1px 3px 0 -1px #111;
    background: linear-gradient(#ac75b5, #ac75b5) padding-box, #111 border-box;
}
.thumb {
    width: 36px;
    height: 18px;
    margin-top: 6px;
    background: #f3e9f1;
}
.thumb.doc {
    display: flex;
    justify-content: space-around;
    border: 1px solid #c9d6e8;
    padding: 2px 3px;
}
.thumb.doc i {
    width: 7px;
    background: repeating-linear-gradient(#777 0 1px, #ddd 1px 3px);
}
.thumb.doc i + i {
    width: 11px;
    background: repeating-linear-gradient(#bcd8a5 0 1px, #eee 1px 4px);
}
.thumb.flat {
    height: 8px;
    margin-top: 12px;
    padding: 3px 2px 0 28px;
}
.thumb.flat i {
    display: block;
    height: 2px;
    background: #4b9be0;
}
.mini svg {
    position: absolute;
    right: 5px;
    bottom: 9px;
    width: 11px;
    height: 11px;
}
.tall svg {
    right: 0;
    width: 14px;
    height: 13px;
}
.shot {
    width: 19px;
    height: 35px;
    margin: -2px 0 0 2px;
    padding-top: 16px;
    background: linear-gradient(#333 0 2px, transparent 2px 12px, #4b8cdd 12px 14px, transparent 14px), #f3f4f8;
    font-size: 5px;
    text-align: center;
    color: #678;
}

/* overlays */
.notification {
    position: absolute;
    left: 1040px;
    top: 27px;
    width: 232px;
    height: 50px;
    border-radius: 7px;
    background: #ebe7e7;
    box-shadow: 0 0 2px #999;
}
.notification i {
    position: absolute;
    left: 7px;
    top: 7px;
    width: 8px;
    height: 34px;
    background: linear-gradient(#d2504b 0 10px, #ddd 10px 17px, #333 17px);
}
.author {
    position: absolute;
    left: 1048px;
    top: 30px;
    width: 225px;
    height: 42px;
    border-radius: 4px;
    background: #b0b0b0;
    box-shadow: inset 0 0 1px #666, 0 1px 2px #777;
    color: #fff;
    font: 17.300px/43px "Liberation Sans", sans-serif;
    text-align: center;
    white-space: nowrap;
}
.banner {
    position: absolute;
    left: 0;
    top: 288px;
    width: 1280px;
    height: 202px;
    padding-left: 50px;
    border-radius: 4px;
    background: #0095c3;
    box-shadow: 0 0 2px #345;
    color: #faf200;
    font: 700 87.300px/205px "Liberation Sans", sans-serif;
    white-space: nowrap;
}
.pointer {
    position: absolute;
    left: 293px;
    top: 354px;
}
```
